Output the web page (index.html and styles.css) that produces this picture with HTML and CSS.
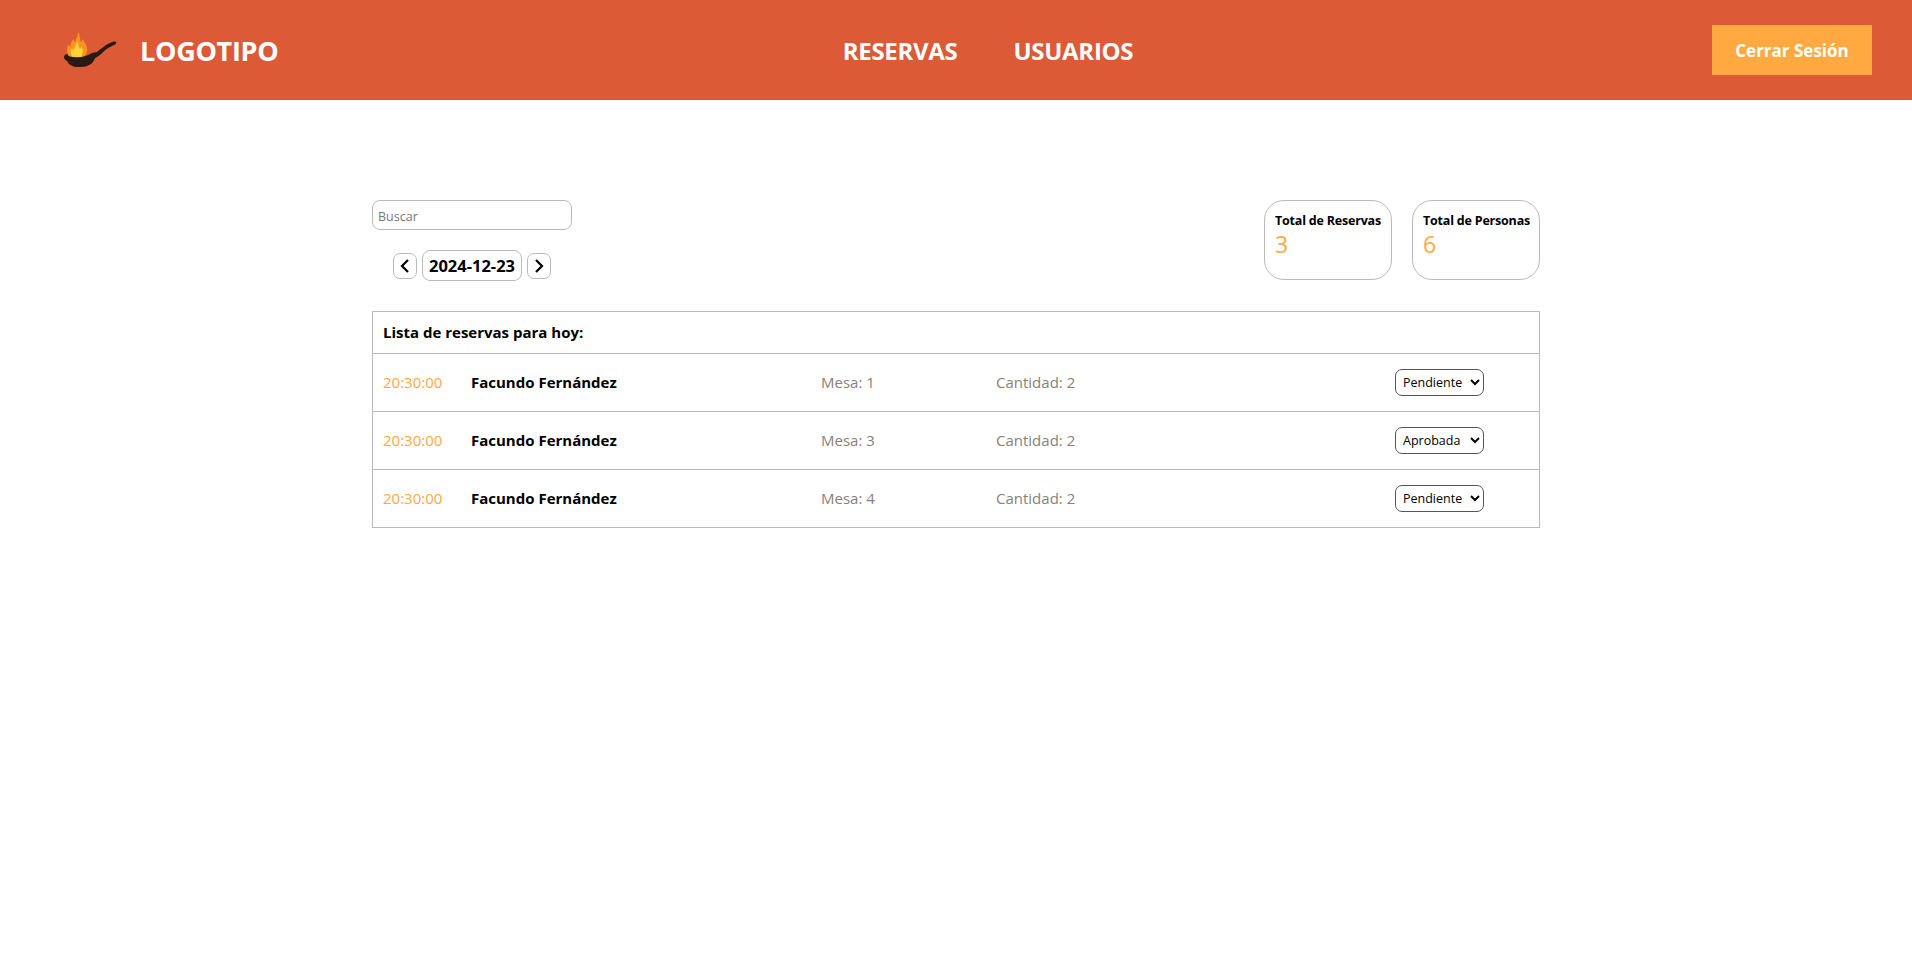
FILE: index.html
```html
<!DOCTYPE html>
<html lang="es">
<head>
  <meta charset="UTF-8">
  <meta name="viewport" content="width=device-width, initial-scale=1.0">
  <title>Reservas</title>
  <link rel="stylesheet" href="styles.css">
</head>
<body>
  <header class="topbar">
    <div class="brand">
      <svg class="brand-icon" width="56" height="38" viewBox="0 0 56 38">
        <path d="M16 1c3 4 1 7 3 10 1-1 1-2 1-3 4 4 6 9 5 13-1 3-3 5-5 6H10c-3-1-5-4-5-8 0-3 1-5 2-6 0 2 1 3 2 3-1-4 1-6 3-8 0 2 0 3 1 3 1-3 3-6 3-10z" fill="#f7931e"/>
        <path d="M15 10c2 3 1 6 3 8 1-1 1-2 1-3 2 3 3 7 0 11h-8c-3-3-3-6-1-9 0 1 1 2 2 2 0-3 3-5 3-9z" fill="#ffd23c"/>
        <path d="M2 26c0-2 2-3 4-3-1 2 2 3 6 3 7 1 13-1 18-4l5-1c4-3 8-7 13-9 2-1 5-2 6-1 1 2-2 3-4 4-5 2-8 5-12 9l-3 2c-1 1-2 1-3 2-5 3-11 4-16 4-7 0-14-2-14-6z" fill="#2a1a14"/>
        <path d="M5 30c5 2 11 2 16 1 4-1 8-2 12-4-1 3-3 6-6 7-3 2-7 2-11 2-5 0-9-2-11-6z" fill="#2a1a14"/>
      </svg>
      <span class="brand-name">LOGOTIPO</span>
    </div>
    <nav class="menu">
      <a href="#">RESERVAS</a>
      <a href="#">USUARIOS</a>
    </nav>
    <button class="logout">Cerrar Sesión</button>
  </header>

  <main class="content">
    <section class="tools">
      <div class="filters">
        <input class="search" type="text" placeholder="Buscar">
        <div class="date-nav">
          <button class="arrow">
            <svg width="12" height="16" viewBox="0 0 12 16"><path d="M9 2 3 8l6 6" fill="none" stroke="#000" stroke-width="2.2"/></svg>
          </button>
          <span class="date">2024-12-23</span>
          <button class="arrow">
            <svg width="12" height="16" viewBox="0 0 12 16"><path d="m3 2 6 6-6 6" fill="none" stroke="#000" stroke-width="2.2"/></svg>
          </button>
        </div>
      </div>
      <div class="totals">
        <div class="card">
          <h3>Total de Reservas</h3>
          <p>3</p>
        </div>
        <div class="card">
          <h3>Total de Personas</h3>
          <p>6</p>
        </div>
      </div>
    </section>

    <section class="list">
      <h2>Lista de reservas para hoy:</h2>
      <div class="row">
        <span class="time">20:30:00</span>
        <span class="name">Facundo Fernández</span>
        <span class="table-no">Mesa: 1</span>
        <span class="qty">Cantidad: 2</span>
        <select class="status">
          <option selected>Pendiente</option>
          <option>Aprobada</option>
        </select>
      </div>
      <div class="row">
        <span class="time">20:30:00</span>
        <span class="name">Facundo Fernández</span>
        <span class="table-no">Mesa: 3</span>
        <span class="qty">Cantidad: 2</span>
        <select class="status">
          <option>Pendiente</option>
          <option selected>Aprobada</option>
        </select>
      </div>
      <div class="row">
        <span class="time">20:30:00</span>
        <span class="name">Facundo Fernández</span>
        <span class="table-no">Mesa: 4</span>
        <span class="qty">Cantidad: 2</span>
        <select class="status">
          <option selected>Pendiente</option>
          <option>Aprobada</option>
        </select>
      </div>
    </section>
  </main>
</body>
</html>
```

FILE: styles.css
```css
body {
  font-family: "Open Sans", "Noto Sans", sans-serif;
  margin: 0;
  padding: 0;
  background-color: #fff;
  color: #000;
}
.topbar {
  height: 100px;
  background-color: #dc5a36;
  display: grid;
  grid-template-columns: 1fr auto 1fr;
  align-items: center;
  padding: 0 40px 0 62px;
}
.brand {
  display: flex;
  align-items: center;
  gap: 22px;
}
.brand-name {
  color: #fff;
  font-size: 27px;
  font-weight: 700;
  letter-spacing: -0.3px;
}
.menu {
  display: flex;
  gap: 56px;
  margin-left: 42px;
  padding-top: 1px;
}
.menu a {
  color: #fff;
  font-size: 24px;
  font-weight: 700;
  letter-spacing: -0.3px;
  text-decoration: none;
}
.logout {
  justify-self: end;
  width: 160px;
  height: 50px;
  background-color: #ffa940;
  color: #fff;
  border: none;
  font-family: inherit;
  font-size: 17px;
  font-weight: 700;
  cursor: pointer;
}
.content {
  width: 1168px;
  margin: 0 auto;
  padding-top: 100px;
}
.tools {
  display: flex;
  justify-content: space-between;
}
.filters {
  width: 200px;
}
.search {
  display: block;
  box-sizing: border-box;
  width: 200px;
  height: 30px;
  padding: 2px 5px 0;
  font-family: inherit;
  font-size: 12.5px;
  border: 1px solid #bbb;
  border-radius: 8px;
}
.search::placeholder {
  color: #777;
}
.date-nav {
  display: flex;
  justify-content: center;
  align-items: center;
  gap: 5px;
  margin-top: 20px;
}
.arrow {
  box-sizing: border-box;
  width: 24px;
  height: 26px;
  padding: 0;
  display: flex;
  align-items: center;
  justify-content: center;
  background: #fff;
  border: 1px solid #bbb;
  border-radius: 7px;
}
.date {
  box-sizing: border-box;
  width: 100px;
  height: 31px;
  line-height: 30px;
  text-align: center;
  font-size: 16.5px;
  font-weight: 700;
  border: 1px solid #bbb;
  border-radius: 8px;
}
.totals {
  display: flex;
  gap: 20px;
}
.card {
  box-sizing: border-box;
  width: 128px;
  height: 80px;
  padding: 11px 10px;
  border: 1px solid #bbb;
  border-radius: 20px;
}
.card h3 {
  margin: 0;
  font-size: 12.5px;
  font-weight: 700;
  letter-spacing: -0.2px;
  white-space: nowrap;
}
.card p {
  margin: 0;
  color: #ffa940;
  font-size: 23px;
  line-height: 31px;
}
.list {
  margin-top: 30px;
  border: 1px solid #bbb;
}
.list h2 {
  margin: 0;
  height: 41px;
  padding-left: 10px;
  font-size: 15px;
  font-weight: 700;
  line-height: 41px;
}
.row {
  height: 57px;
  border-top: 1px solid #bbb;
  display: flex;
  align-items: center;
  padding-left: 10px;
  font-size: 15px;
}
.row span {
  margin-bottom: 2px;
}
.time {
  width: 88px;
  color: #ffa940;
}
.name {
  width: 350px;
  font-weight: 700;
}
.table-no {
  width: 175px;
  color: #8a7f7a;
}
.qty {
  width: 399px;
  color: #8a7f7a;
}
.status {
  width: 89px;
  height: 27px;
  padding: 0 2px 0 3px;
  font-family: inherit;
  font-size: 12.5px;
  color: #000;
  background: #fff;
  border: 1px solid #555;
  border-radius: 7px;
}
```
